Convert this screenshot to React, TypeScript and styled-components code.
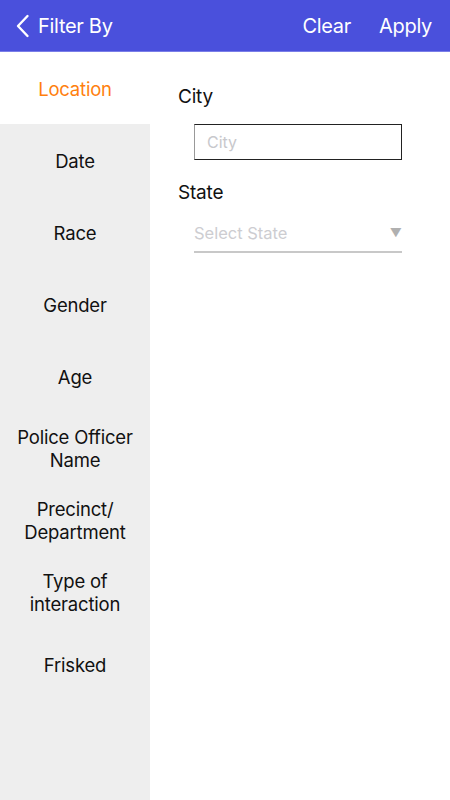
import React, { useState } from "react"
import styled, { createGlobalStyle } from "styled-components"

const GlobalStyle = createGlobalStyle`
    html, body {
        margin: 0;
        padding: 0;
        height: 100%;
    }
    body {
        font-family: Inter, "Liberation Sans", sans-serif;
        background: #fff;
    }
    #root {
        height: 100%;
    }
`

const filters: string[] = [
    "Location",
    "Date",
    "Race",
    "Gender",
    "Age",
    "Police Officer Name",
    "Precinct/ Department",
    "Type of interaction",
    "Frisked",
]

export default function App(){

    const [selected, setSelected] = useState<string>("Location");
    const [city, setCity] = useState<string>("");

    return(
        <Page>
            <GlobalStyle />
            <Header>
                <BackBtn>
                    <svg width="14" height="24" viewBox="0 0 14 24">
                        <path d="M11.5 2 L2 12 L11.5 22" fill="none" stroke="#fff" strokeWidth="2.4" strokeLinecap="round" strokeLinejoin="round" />
                    </svg>
                    <Title>Filter By</Title>
                </BackBtn>
                <Actions>
                    <HeaderBtn>Clear</HeaderBtn>
                    <HeaderBtn>Apply</HeaderBtn>
                </Actions>
            </Header>
            <Body>
                <Sidebar>
                    {filters.map((f) => (
                        <SideItem
                            key={f}
                            $active={selected === f}
                            onClick={() => setSelected(f)}
                        >
                            {f === "Precinct/ Department" ? <>Precinct/<br/>Department</> : f}
                        </SideItem>
                    ))}
                </Sidebar>
                <Content>
                    <Label>City</Label>
                    <FieldWrap $top={15} $bottom={21}>
                        <CityInput
                            type="text"
                            placeholder="City"
                            value={city}
                            onChange={(e) => setCity(e.target.value)}
                        />
                    </FieldWrap>
                    <Label>State</Label>
                    <FieldWrap $top={10} $bottom={0}>
                        <Select>
                            <SelectText>Select State</SelectText>
                            <Arrow>▼</Arrow>
                        </Select>
                    </FieldWrap>
                </Content>
            </Body>
        </Page>
    )
}

const Page = styled.div`
    display: flex;
    flex-direction: column;
    height: 800px;
    width: 450px;
`
const Header = styled.div`
    height: 52px;
    flex-shrink: 0;
    background: #4a50dc;
    border-bottom: 1px solid #7a7ee8;
    box-sizing: border-box;
    display: flex;
    align-items: center;
    justify-content: space-between;
    padding: 0 18px 0 16px;
    color: #fff;
`
const BackBtn = styled.div`
    display: flex;
    align-items: center;
    gap: 8px;
    padding-top: 1px;
`
const Title = styled.span`
    font-size: 20px;
    letter-spacing: -0.3px;
`
const Actions = styled.div`
    display: flex;
    gap: 28px;
`
const HeaderBtn = styled.span`
    font-size: 20px;
    letter-spacing: -0.3px;
    cursor: pointer;
`
const Body = styled.div`
    flex: 1;
    display: flex;
`
const Sidebar = styled.div`
    width: 150px;
    flex-shrink: 0;
    background: #eeeeee;
    display: flex;
    flex-direction: column;
`
const SideItem = styled.div<{ $active: boolean }>`
    height: 72px;
    box-sizing: border-box;
    display: flex;
    align-items: center;
    justify-content: center;
    text-align: center;
    padding: 2px 8px 0;
    font-size: 18.5px;
    line-height: 23px;
    letter-spacing: -0.2px;
    color: ${(p) => (p.$active ? "#ff7f0e" : "#111")};
    background: ${(p) => (p.$active ? "#fff" : "transparent")};
    cursor: pointer;
`
const Content = styled.div`
    flex: 1;
    padding: 33px 48px 0 28px;
    display: flex;
    flex-direction: column;
`
const Label = styled.div`
    font-size: 19px;
    line-height: 24px;
    color: #111;
    letter-spacing: -0.2px;
`
const FieldWrap = styled.div<{ $top: number; $bottom: number }>`
    padding: ${(p) => p.$top}px 0 ${(p) => p.$bottom}px 16px;
`
const CityInput = styled.input`
    width: 100%;
    height: 36px;
    box-sizing: border-box;
    border: 1px solid #222;
    border-left-color: #999;
    padding: 0 12px;
    font-family: inherit;
    font-size: 16px;
    outline: none;
    &::placeholder{
        color: #c8c8cc;
    }
`
const Select = styled.div`
    display: flex;
    align-items: center;
    justify-content: space-between;
    height: 38px;
    box-sizing: border-box;
    border-bottom: 2px solid #c8c8c8;
    padding-bottom: 1px;
`
const SelectText = styled.span`
    font-size: 16.5px;
    color: #cdcdd1;
`
const Arrow = styled.span`
    font-size: 12px;
    color: #b0b0b0;
`
